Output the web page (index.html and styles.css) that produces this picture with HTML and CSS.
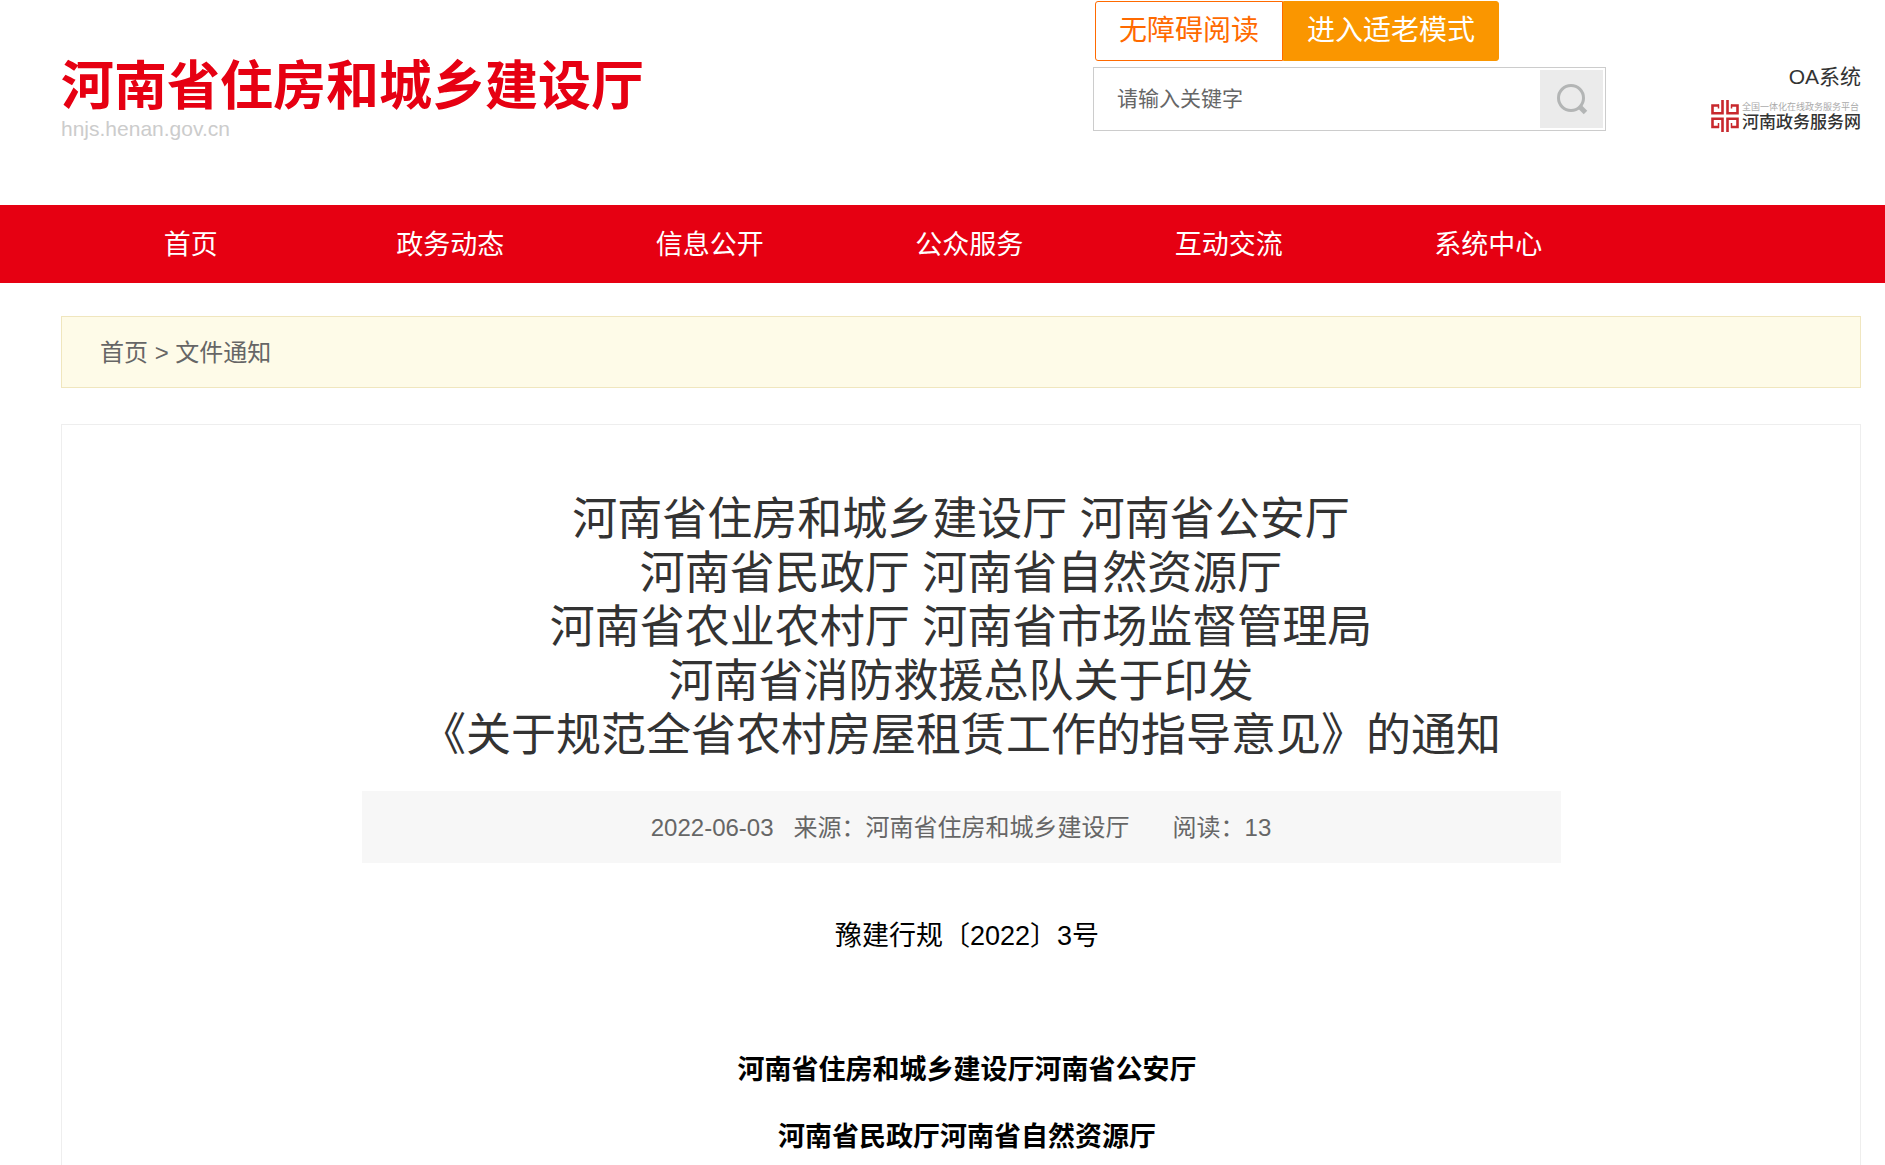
FILE: index.html
```html
<!DOCTYPE html>
<html lang="zh-CN">
<head>
<meta charset="utf-8">
<title>河南省住房和城乡建设厅</title>
<link rel="stylesheet" href="styles.css">
</head>
<body>
<header class="header">
  <a class="brand" href="#">
    <span class="brand-name">河南省住房和城乡建设厅</span>
    <span class="brand-url">hnjs.henan.gov.cn</span>
  </a>
  <div class="tools">
    <div class="modes">
      <button class="mode mode-plain" type="button">无障碍阅读</button>
      <button class="mode mode-solid" type="button">进入适老模式</button>
    </div>
    <form class="search">
      <input class="search-input" type="text" aria-label="关键字" placeholder="请输入关键字">
      <button class="search-button" type="button" aria-label="搜索">
        <svg width="32" height="32" viewBox="0 0 32 32" fill="none" stroke="#b3b5b5" stroke-width="3">
          <circle cx="15" cy="15" r="12.5"/>
          <path d="M23.500 23.500l6 6" stroke-width="5"/>
        </svg>
      </button>
    </form>
  </div>
  <div class="links">
    <a class="oa" href="#">OA系统</a>
    <a class="service" href="#">
      <svg width="28" height="32" viewBox="0 0 28 32" fill="none" stroke="#c8282d" stroke-width="2.600">
        <path d="M11.500 0v14.500M8 5.500H1.500v7.700h10M16.500 0v14.500M20 5.500h6.500v7.700h-10"/>
        <path d="M11.500 32V17.500M8 27H1.500v-8.200h10M16.500 32V17.500M20 27h6.500v-8.200h-10"/>
        <path d="M7.500 4.500v4M20.500 4.500v4M7.500 28v-5M20.500 28v-5" stroke-width="1.500"/>
      </svg>
      <span class="service-text">
        <span class="service-small">全国一体化在线政务服务平台</span>
        <span class="service-name">河南政务服务网</span>
      </span>
    </a>
  </div>
</header>
<nav class="nav">
  <a class="nav-link" href="#">首页</a>
  <a class="nav-link" href="#">政务动态</a>
  <a class="nav-link" href="#">信息公开</a>
  <a class="nav-link" href="#">公众服务</a>
  <a class="nav-link" href="#">互动交流</a>
  <a class="nav-link" href="#">系统中心</a>
</nav>
<main class="main">
  <div class="crumbs"><a href="#">首页</a> &gt; <a href="#">文件通知</a></div>
  <article class="article">
    <h1 class="title">河南省住房和城乡建设厅 河南省公安厅<br>河南省民政厅 河南省自然资源厅<br>河南省农业农村厅 河南省市场监督管理局<br>河南省消防救援总队关于印发<br>《关于规范全省农村房屋租赁工作的指导意见》的通知</h1>
    <div class="meta">
      <span class="meta-date">2022-06-03</span>
      <span class="meta-source">来源：河南省住房和城乡建设厅</span>
      <span>阅读：13</span>
    </div>
    <div class="content">
      <p class="doc-number">豫建行规〔2022〕3号</p>
      <p class="issuer">河南省住房和城乡建设厅河南省公安厅</p>
      <p class="issuer">河南省民政厅河南省自然资源厅</p>
    </div>
  </article>
</main>
</body>
</html>
```
FILE: styles.css
```css
* {
  box-sizing: border-box;
}

body {
  display: flex;
  flex-direction: column;
  min-height: 100vh;
  margin: 0;
  background: #fff;
  color: #333;
  font-family: "Liberation Sans", Arial, "Noto Sans CJK SC", sans-serif;
  font-size: 24px;
}

a {
  color: inherit;
  text-decoration: none;
}

button,
input {
  font-family: inherit;
}

.header {
  display: flex;
  align-items: flex-start;
  height: 205px;
  padding: 0 24px 0 61px;
}

.brand {
  display: flex;
  flex-direction: column;
  flex: 1;
  padding-top: 56px;
}

.brand-name {
  color: #e60012;
  font-size: 53px;
  font-weight: 700;
  line-height: 61px;
}

.brand-url {
  color: #ccc;
  font-size: 21px;
  line-height: 24px;
}

.tools {
  width: 513px;
  padding-top: 1px;
}

.modes {
  display: flex;
  padding-left: 2px;
}

.mode {
  height: 60px;
  padding: 0 23px;
  border: 1px solid #ff6a00;
  font-size: 28px;
  line-height: 58px;
}

.mode-plain {
  background: #fff;
  color: #ff6a00;
  border-radius: 3px 0 0 3px;
}

.mode-solid {
  background: #fa9600;
  border-color: #fa9600;
  color: #fff;
  border-radius: 0 3px 3px 0;
}

.search {
  display: flex;
  height: 64px;
  margin-top: 6px;
  padding: 2px;
  border: 1px solid #ccc;
}

.search-input {
  flex: 1;
  min-width: 0;
  padding: 0 0 0 21px;
  border: 0;
  outline: 0;
  color: #666;
  font-size: 21px;
}

.search-input::placeholder {
  color: #666;
  opacity: 1;
}

.search-button {
  display: flex;
  align-items: center;
  justify-content: center;
  width: 63px;
  padding: 0;
  border: 0;
  background: #ebebeb;
}

.links {
  display: flex;
  flex-direction: column;
  align-items: flex-end;
  width: 255px;
  padding-top: 61px;
}

.oa {
  font-size: 21px;
  line-height: 32px;
}

.service {
  display: flex;
  align-items: center;
  gap: 3px;
  margin-top: 5px;
}

.service-text {
  display: flex;
  flex-direction: column;
  padding-top: 3px;
}

.service-small {
  color: #aaa;
  font-size: 9px;
  line-height: 12px;
}

.service-name {
  font-size: 17px;
  font-weight: 500;
  line-height: 20px;
}

.nav {
  display: grid;
  grid-template-columns: repeat(6, 1fr);
  padding: 2px 267px 0 61px;
  background: #e60012;
}

.nav-link {
  color: #fff;
  font-size: 27px;
  line-height: 76px;
  text-align: center;
}

.main {
  display: flex;
  flex: 1;
  flex-direction: column;
  padding: 33px 24px 0 61px;
}

.crumbs {
  padding: 2px 38px 0;
  border: 1px solid #f0e6be;
  background: #fefbe8;
  color: #666;
  line-height: 68px;
}

.article {
  flex: 1;
  margin-top: 36px;
  padding: 68px 24px 0;
  border: 1px solid #eee;
  border-bottom: 0;
}

.title {
  margin: 0;
  font-size: 45px;
  font-weight: 400;
  line-height: 54px;
  text-align: center;
}

.meta {
  display: flex;
  justify-content: center;
  width: 1199px;
  max-width: 100%;
  margin: 28px auto 0;
  padding-top: 2px;
  background: #f7f7f7;
  color: #666;
  line-height: 70px;
}

.meta-date {
  margin-right: 20px;
}

.meta-source {
  margin-right: 43px;
}

.content {
  padding: 46px 0 0 12px;
  color: #000;
  font-size: 27px;
  line-height: 54px;
  text-align: center;
}

.doc-number {
  margin: 0 0 80px;
}

.issuer {
  margin: 0;
  font-weight: 700;
}

.issuer + .issuer {
  margin-top: 13px;
}
```
